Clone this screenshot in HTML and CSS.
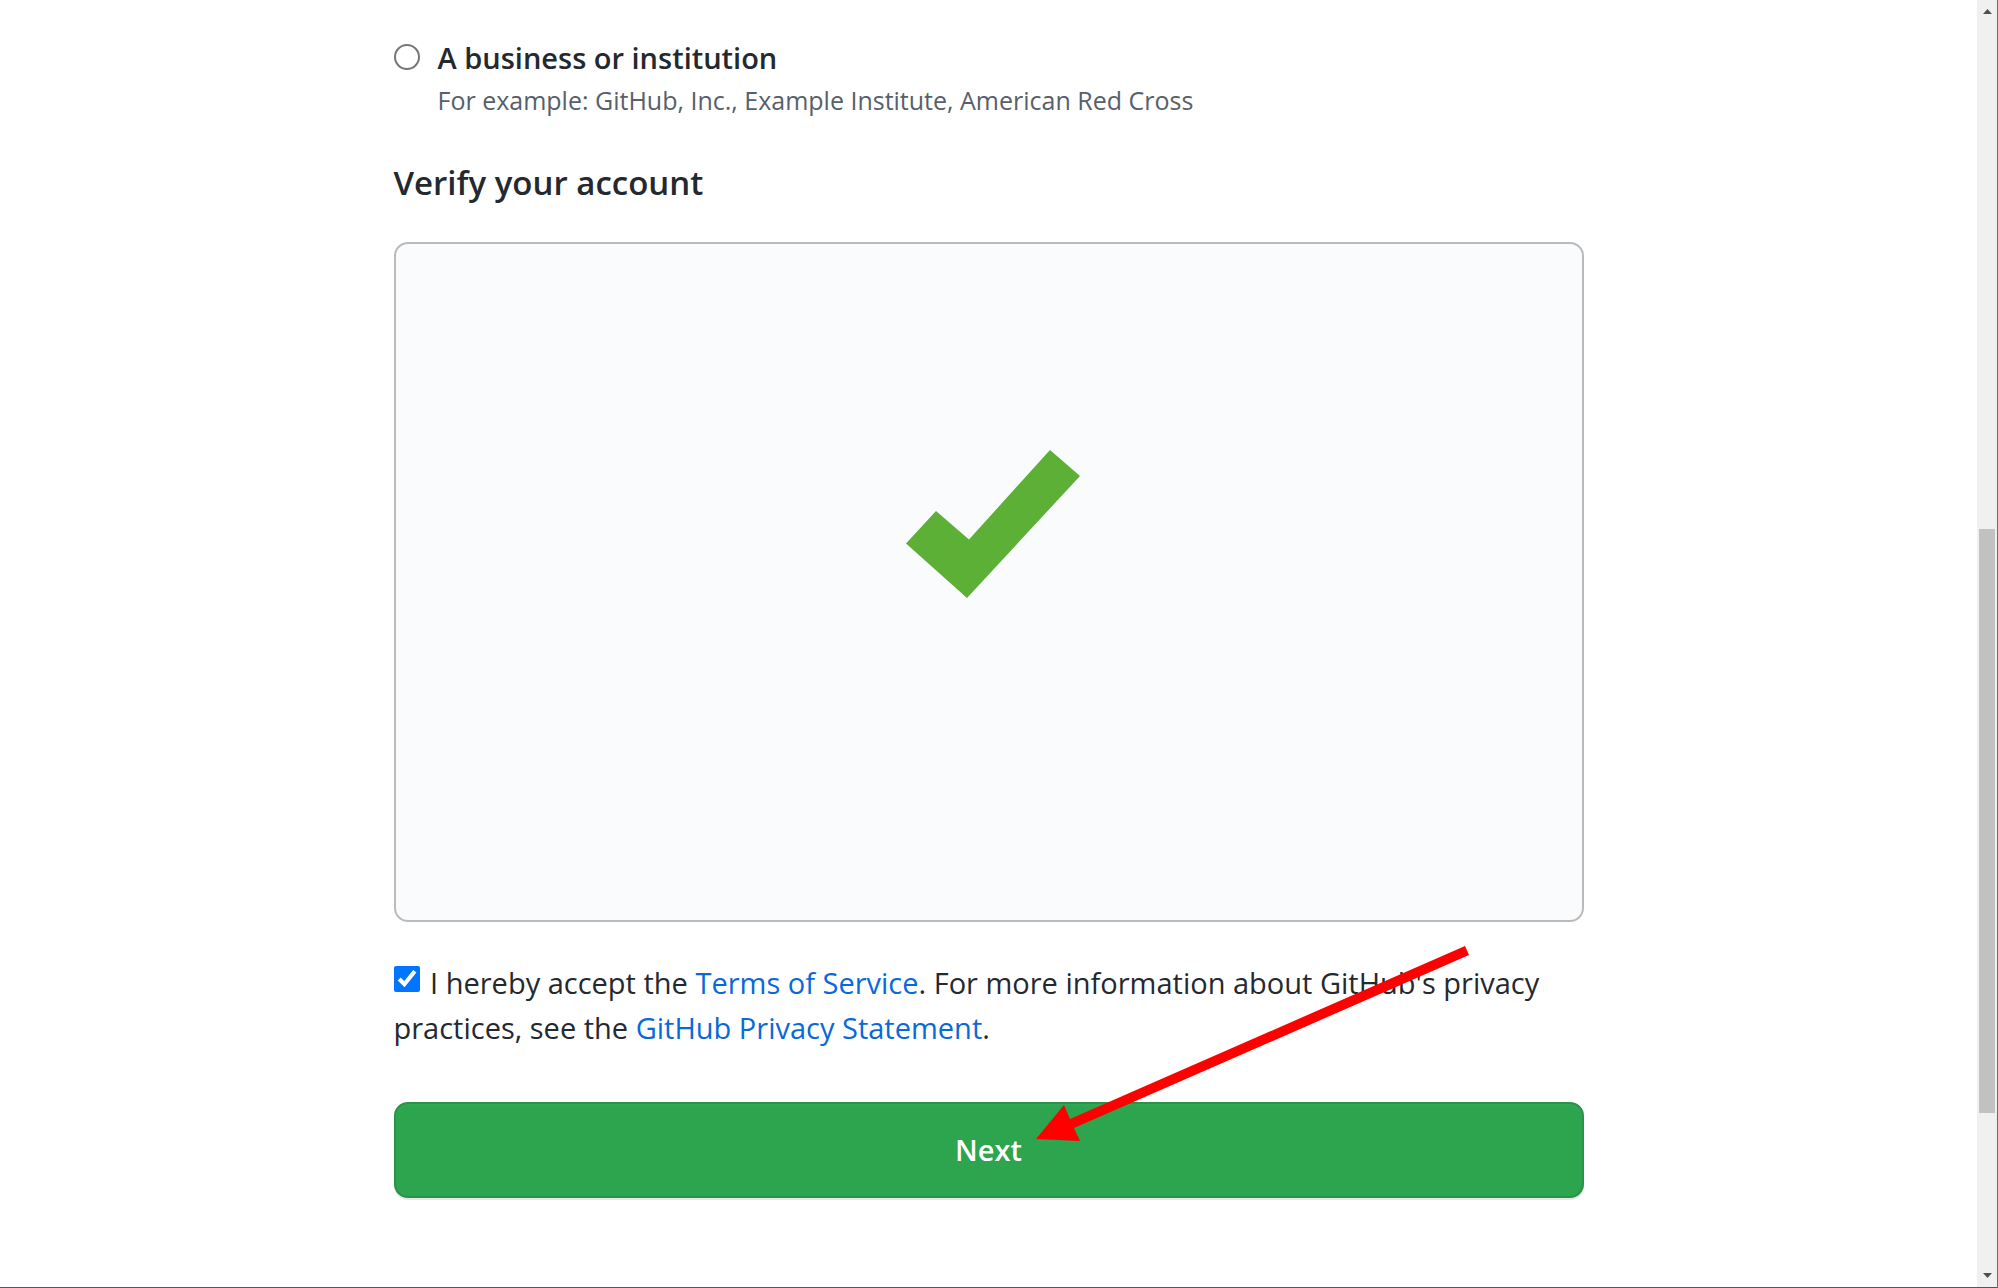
FILE: index.html
```html
<!DOCTYPE html>
<html lang="en">
<head>
<meta charset="utf-8">
<meta name="viewport" content="width=device-width, initial-scale=1">
<title>Create your organization</title>
<link rel="stylesheet" href="styles.css">
</head>
<body>
<div class="window">
  <main class="page">
    <form class="signup">
      <div class="option">
        <input class="option-input" type="radio" id="business" name="owner" aria-describedby="business-note">
        <div>
          <label class="option-label" for="business">A business or institution</label>
          <p class="option-note" id="business-note">For example: GitHub, Inc., Example Institute, American Red Cross</p>
        </div>
      </div>
      <h2 class="heading">Verify your account</h2>
      <div class="captcha">
        <svg class="captcha-check" viewBox="0 0 182 148" role="img" aria-label="Verified">
          <path d="M8 93.500 38 61 71 89.500 152 0 182 26 69 148z" fill="#5bb035"/>
        </svg>
      </div>
      <p class="consent">
        <input class="consent-input" type="checkbox" id="terms" checked>
        <label for="terms">I hereby accept the <a class="link" href="#terms-of-service">Terms of Service</a>. For more information about GitHub's privacy practices, see the <a class="link" href="#privacy">GitHub Privacy Statement</a>.</label>
      </p>
      <div class="submit">
        <button class="button" type="submit">Next</button>
        <svg class="pointer" viewBox="0 0 434 196" aria-hidden="true">
          <path d="M0 193 28 159 34 173 429 0 433 9 38 182 44 195z" fill="#f00"/>
        </svg>
      </div>
    </form>
  </main>
  <div class="scrollbar" aria-hidden="true">
    <svg class="scroll-arrow" viewBox="0 0 9 5"><path d="M0 5 4.500 0 9 5z" fill="#505050"/></svg>
    <div class="scroll-track"><div class="scroll-thumb"></div></div>
    <svg class="scroll-arrow" viewBox="0 0 9 5"><path d="M0 0h9L4.500 5z" fill="#505050"/></svg>
  </div>
</div>
</body>
</html>
```
FILE: styles.css
```css
* {
  box-sizing: border-box;
}

body {
  margin: 0;
  background: #fff;
  color: #24292f;
  font-family: "Open Sans", "Noto Sans", sans-serif;
  font-size: 29px;
  line-height: 45px;
}

p,
h2 {
  margin: 0;
}

.window {
  display: flex;
  min-height: 100vh;
  border-right: 1px solid #6b6b6b;
  border-bottom: 1px solid #55555a;
}

.page {
  flex: 1;
  padding: 36px 24px;
}

.signup {
  max-width: 1190px;
  margin: 0 auto;
}

.option {
  display: flex;
  gap: 18px;
}

.option-input,
.consent-input {
  flex: none;
  width: 26px;
  height: 26px;
  margin: 0;
}

.option-input {
  margin-top: 8px;
  appearance: none;
  border: 2px solid #767676;
  border-radius: 50%;
  background: #fff;
}

.option-input:checked {
  border: 8px solid #0075ff;
}

.option-label {
  display: block;
  font-weight: 600;
  line-height: 44px;
}

.option-note {
  color: #57606a;
  font-size: 25px;
  line-height: 40px;
}

.heading {
  margin: 38px 0 34px;
  font-size: 33px;
  font-weight: 600;
  line-height: 50px;
}

.captcha {
  display: flex;
  justify-content: center;
  align-items: flex-start;
  min-height: 680px;
  padding-top: 206px;
  border: 2px solid #bbb;
  border-radius: 14px;
  background: #fafbfd;
}

.captcha-check {
  width: 182px;
  height: 148px;
}

.consent {
  margin: 38px 0 52px;
}

.consent-input {
  margin-right: 3px;
  accent-color: #0075ff;
  vertical-align: 2px;
}

.link {
  color: #0969da;
  text-decoration: none;
}

.submit {
  position: relative;
}

.button {
  display: block;
  width: 100%;
  padding: 24px;
  border: 2px solid #2a9348;
  border-radius: 14px;
  background: #2da44e;
  box-shadow: 0 2px 0 rgba(27, 31, 36, 0.1), inset 0 2px 0 rgba(255, 255, 255, 0.03);
  color: #fff;
  font: inherit;
  font-weight: 600;
  line-height: 44px;
}

/* Callout arrow laid over the consent text, ending at the button label */
.pointer {
  position: absolute;
  top: -156px;
  left: calc(50% + 47px);
  width: 434px;
  height: 196px;
  pointer-events: none;
}

.scrollbar {
  display: flex;
  flex: none;
  flex-direction: column;
  align-items: center;
  gap: 6px;
  width: 20px;
  padding: 9px 1px;
  background: #f0f0f0;
}

.scroll-arrow {
  width: 9px;
  height: 5px;
}

.scroll-track {
  flex: 1;
  align-self: stretch;
  display: grid;
  grid-template-rows: 509fr 583fr 154fr;
  padding: 0 1px;
}

.scroll-thumb {
  grid-row: 2;
  background: #c1c1c1;
}
```
